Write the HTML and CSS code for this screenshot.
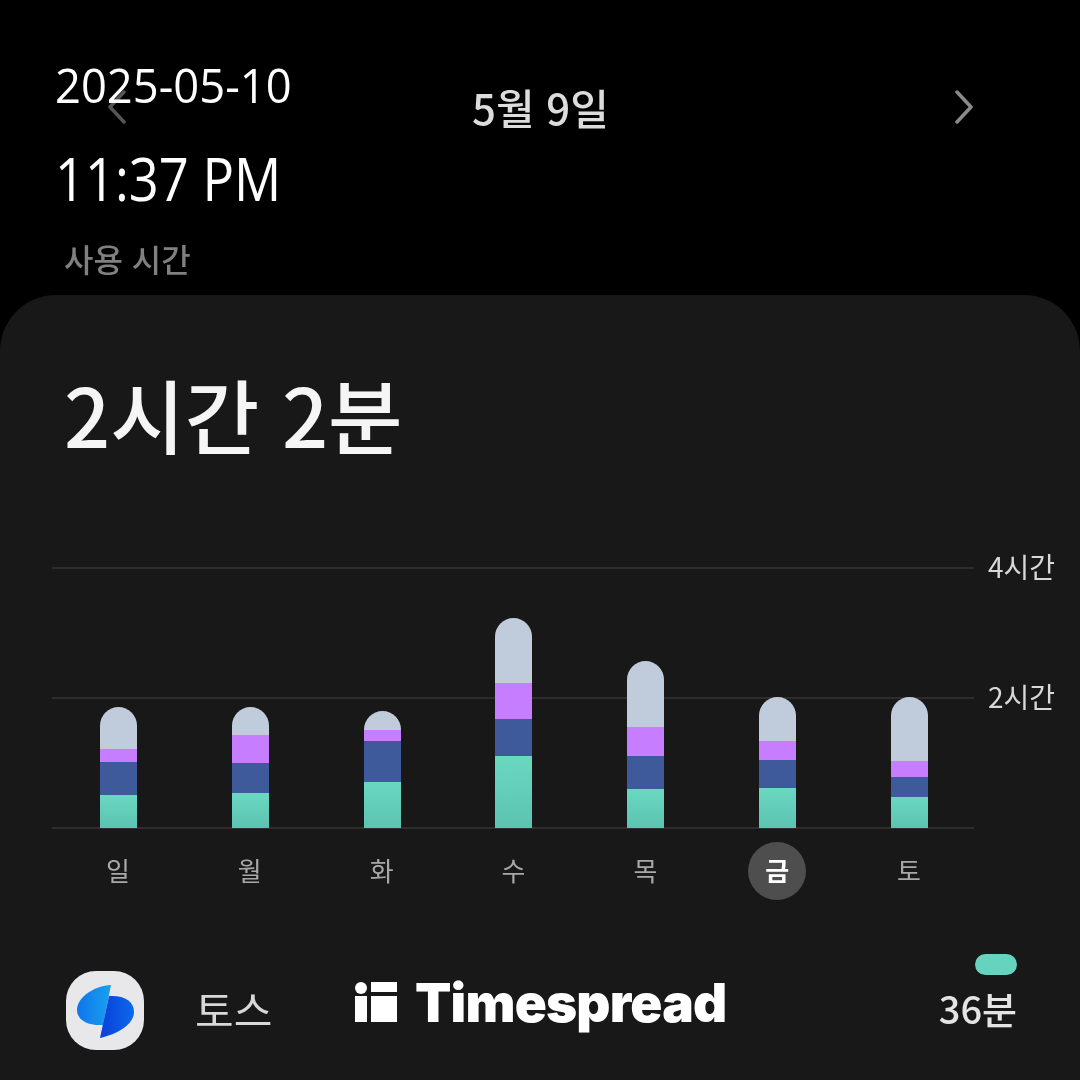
FILE: index.html
```html
<!DOCTYPE html>
<html lang="ko">
<head>
<meta charset="utf-8">
<title>사용 시간</title>
<link rel="stylesheet" href="styles.css">
</head>
<body>
<main class="screen">
  <header class="top soft">
    <nav class="date-nav">
      <svg class="chev chev-left" width="20" height="34" viewBox="0 0 20 34"><path d="M17 2 3 17l14 15" /></svg>
      <span class="date-title">5월 9일</span>
      <svg class="chev chev-right" width="20" height="34" viewBox="0 0 20 34"><path d="M3 2l14 15L3 32" /></svg>
    </nav>
    <div class="section-label">사용 시간</div>
  </header>

  <section class="card soft">
    <h1 class="total">2시간 2분</h1>

    <div class="chart">
      <div class="plot">
        <div class="grid-lines">
          <div class="grid-row"><span class="line"></span><span class="axis">4시간</span></div>
          <div class="grid-row"><span class="line"></span><span class="axis">2시간</span></div>
          <div class="grid-row"><span class="line"></span></div>
        </div>
        <div class="bars">
          <div class="bar"><i class="seg gray" style="height:42px"></i><i class="seg purple" style="height:13px"></i><i class="seg blue" style="height:33px"></i><i class="seg green" style="height:33px"></i></div>
          <div class="bar"><i class="seg gray" style="height:28px"></i><i class="seg purple" style="height:28px"></i><i class="seg blue" style="height:30px"></i><i class="seg green" style="height:35px"></i></div>
          <div class="bar"><i class="seg gray" style="height:19px"></i><i class="seg purple" style="height:11px"></i><i class="seg blue" style="height:41px"></i><i class="seg green" style="height:46px"></i></div>
          <div class="bar"><i class="seg gray" style="height:65px"></i><i class="seg purple" style="height:36px"></i><i class="seg blue" style="height:37px"></i><i class="seg green" style="height:72px"></i></div>
          <div class="bar"><i class="seg gray" style="height:66px"></i><i class="seg purple" style="height:29px"></i><i class="seg blue" style="height:33px"></i><i class="seg green" style="height:39px"></i></div>
          <div class="bar"><i class="seg gray" style="height:44px"></i><i class="seg purple" style="height:19px"></i><i class="seg blue" style="height:28px"></i><i class="seg green" style="height:40px"></i></div>
          <div class="bar"><i class="seg gray" style="height:64px"></i><i class="seg purple" style="height:16px"></i><i class="seg blue" style="height:20px"></i><i class="seg green" style="height:31px"></i></div>
        </div>
      </div>
      <div class="days">
        <span class="day">일</span>
        <span class="day">월</span>
        <span class="day">화</span>
        <span class="day">수</span>
        <span class="day">목</span>
        <span class="day day-active"><b>금</b></span>
        <span class="day">토</span>
      </div>
    </div>

    <div class="app-row">
      <div class="app-icon">
        <svg width="78" height="79" viewBox="0 0 78 79">
          <defs>
            <linearGradient id="tossLeft" x1="0" y1="0" x2="1" y2="0">
              <stop offset="0" stop-color="#0f74ee"/>
              <stop offset="1" stop-color="#19a2ec"/>
            </linearGradient>
            <linearGradient id="tossRight" x1="0" y1="0" x2="1" y2="0">
              <stop offset="0" stop-color="#0a40d8"/>
              <stop offset="1" stop-color="#0b68ec"/>
            </linearGradient>
          </defs>
          <path fill="url(#tossLeft)" d="M45 14 C28 15 11 26 11 39 C11 49 22 55 37 54 Z"/>
          <path fill="url(#tossRight)" d="M43 25 C58 24 68 30 68 41 C68 53 52 63 34 67 Z"/>
        </svg>
      </div>
      <span class="app-name">토스</span>
      <div class="app-usage">
        <span class="pill"></span>
        <span class="app-time">36분</span>
      </div>
    </div>
  </section>

  <div class="stamp">
    <div class="stamp-date">2025-05-10</div>
    <div class="stamp-time">11:37 PM</div>
  </div>

  <div class="brand">
    <svg width="42" height="40" viewBox="0 0 42 40">
      <circle cx="6" cy="6" r="6" />
      <rect x="0" y="14" width="12" height="26" />
      <rect x="16" y="0" width="26" height="10" />
      <rect x="16" y="14" width="26" height="26" />
    </svg>
    <span class="brand-name">Timespread</span>
  </div>
</main>
</body>
</html>
```

FILE: styles.css
```css
* { box-sizing: border-box; }

html, body {
  margin: 0;
  background: #000;
}

body {
  font-family: "Noto Sans CJK KR", "Noto Sans", sans-serif;
  color: #fff;
}

.screen {
  position: relative;
  width: 1080px;
  height: 1080px;
  overflow: hidden;
  background: #000;
  display: flex;
  flex-direction: column;
}

.soft { filter: blur(0.6px); }

.top {
  height: 295px;
  padding-top: 84px;
  display: flex;
  flex-direction: column;
}

.date-nav {
  height: 46px;
  padding: 0 106px 0 107px;
  display: flex;
  align-items: center;
  justify-content: space-between;
}

.chev { fill: none; stroke-width: 3.5; stroke-linecap: round; stroke-linejoin: round; }
.chev-left { stroke: #555; }
.chev-right { stroke: #8a8a8a; }

.date-title {
  font-size: 42px;
  font-weight: 500;
  line-height: 46px;
  color: #dcdcdc;
}

.section-label {
  margin: 103px 0 0 64px;
  font-size: 32px;
  font-weight: 500;
  line-height: 50px;
  color: #808080;
}

.card {
  flex: 1;
  background: #181818;
  border-radius: 56px 56px 0 0;
  display: flex;
  flex-direction: column;
}

.total {
  margin: 72px 0 0 64px;
  height: 92px;
  font-size: 81px;
  font-weight: 500;
  line-height: 92px;
  color: #f5f5f5;
}

.chart {
  margin: 108px 0 0 52px;
}

.plot {
  display: grid;
  height: 262px;
  width: 1028px;
}

.grid-lines, .bars { grid-area: 1 / 1; }

.grid-lines {
  display: flex;
  flex-direction: column;
  justify-content: space-between;
}

.grid-row {
  height: 2px;
  display: flex;
  align-items: center;
}

.line {
  flex: none;
  width: 922px;
  height: 2px;
  background: #2d2d2d;
}

.axis {
  margin-left: 14px;
  padding-bottom: 4px;
  font-size: 28px;
  line-height: 34px;
  white-space: nowrap;
  color: #d8d8d8;
}

.bars {
  width: 922px;
  margin-left: 1px;
  padding-bottom: 1px;
  display: grid;
  grid-template-columns: repeat(7, 1fr);
  align-items: end;
  justify-items: center;
}

.bar {
  width: 37px;
  display: flex;
  flex-direction: column;
  overflow: hidden;
  border-radius: 18.5px 18.5px 0 0;
}

.seg { display: block; }
.gray { background: #c0cbdc; }
.purple { background: #c67dff; }
.blue { background: #3f5a9b; }
.green { background: linear-gradient(#6ad8c1, #5cc3b1); }

.days {
  width: 923px;
  margin-top: 13px;
  display: grid;
  grid-template-columns: repeat(7, 1fr);
  justify-items: center;
}

.day {
  width: 58px;
  height: 58px;
  padding-bottom: 3px;
  display: flex;
  align-items: center;
  justify-content: center;
  font-size: 26px;
  color: #a8a8a8;
}

.day-active {
  border-radius: 50%;
  background: #4e4e4e;
  color: #fff;
}

.app-row {
  margin: 54px 63px 0 66px;
  height: 100px;
  display: flex;
  align-items: flex-start;
}

.app-icon {
  width: 78px;
  height: 79px;
  margin-top: 17px;
  border-radius: 30px;
  background: #e8e8ea;
}

.app-icon svg { display: block; }

.app-name {
  margin: 27px 0 0 51px;
  font-size: 42px;
  font-weight: 400;
  line-height: 56px;
  color: #d8d8d8;
}

.app-usage {
  margin-left: auto;
  display: flex;
  flex-direction: column;
  align-items: flex-end;
}

.pill {
  width: 42px;
  height: 21px;
  border-radius: 11px;
  background: #66d3bf;
}

.app-time {
  margin-top: 7px;
  font-size: 38px;
  font-weight: 500;
  line-height: 52px;
  color: #e4e4e4;
}

.stamp {
  position: absolute;
  left: 55px;
  top: 55px;
  font-family: "Open Sans", sans-serif;
  font-weight: 400;
  color: #fff;
}

.stamp-date {
  font-size: 47px;
  line-height: 60px;
  transform: scaleX(0.965);
  transform-origin: 0 0;
}

.stamp-time {
  margin-top: 25px;
  font-size: 60px;
  line-height: 76px;
  transform: scaleX(0.875);
  transform-origin: 0 0;
}

.brand {
  position: absolute;
  left: 355px;
  top: 982px;
  display: flex;
  align-items: flex-start;
  gap: 18px;
}

.brand svg { fill: #fff; display: block; }

.brand-name {
  margin-top: -9px;
  font-family: Inter, sans-serif;
  font-size: 53px;
  font-weight: 900;
  letter-spacing: -0.8px;
  line-height: 60px;
  color: #fff;
}
```
